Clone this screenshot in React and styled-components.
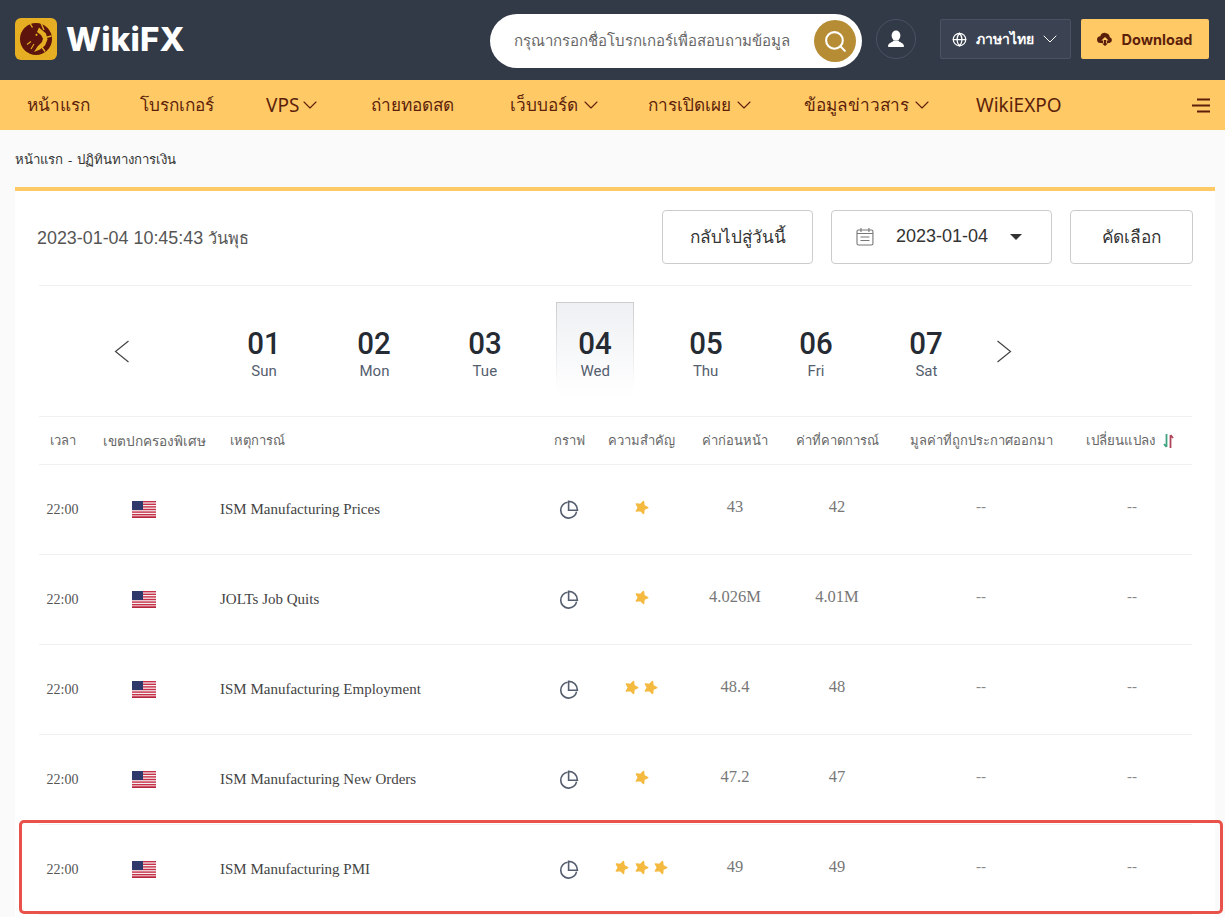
import React from "react";
import styled, { createGlobalStyle } from "styled-components";
import { ChevronDown, Search, Globe } from "lucide-react";

const Global = createGlobalStyle`
  html, body { margin: 0; padding: 0; background: #fafafa; overflow: hidden; height: 917px; }
  * { box-sizing: border-box; }
  body { font-family: "Noto Sans", "Liberation Sans", sans-serif; }
`;

const Page = styled.div`position: relative; width: 1225px; height: 917px; overflow: hidden;`;

const Header = styled.header`
  height: 80px; background: #323a48; display: flex; align-items: center; padding: 0 16px 0 15px;
`;
const LogoWrap = styled.div`display: flex; align-items: center; gap: 9px; margin-top: -2px;`;
const LogoText = styled.span`
  font-family: "Inter", "Liberation Sans", sans-serif; font-weight: 800; font-size: 33px; color: #fff; letter-spacing: .2px;
`;
const SearchBox = styled.div`
  margin-left: auto; width: 372px; height: 54px; background: #fff; border-radius: 27px;
  display: flex; align-items: center; justify-content: space-between; padding: 0 6px 0 24px;
  font-size: 15px; color: #666; margin-top: 2px; white-space: nowrap;
`;
const SearchBtn = styled.div`
  width: 42px; height: 42px; border-radius: 50%; background: #b68d35; color: #fff;
  display: flex; align-items: center; justify-content: center;
`;
const UserBtn = styled.div`
  width: 40px; height: 40px; border-radius: 50%; border: 1px solid #4a5264; margin-left: 14px;
  display: flex; align-items: center; justify-content: center; margin-top: -2px;
`;
const LangBtn = styled.div`
  width: 131px; height: 40px; margin-left: 24px; margin-top: -2px; background: #3b4352; border: 1px solid #4a5264; border-radius: 2px;
  display: flex; align-items: center; padding: 0 0 0 11px; color: #fff; font-size: 14px; font-weight: 700; white-space: nowrap;
  span { margin: 0 4px 0 9px; }
`;
const DownloadBtn = styled.div`
  width: 128px; height: 40px; margin-left: 10px; margin-top: -2px; background: #ffc966; border-radius: 2px;
  display: flex; align-items: center; justify-content: center; gap: 8px; color: #5c1f0a;
  font-size: 14.5px; font-weight: 700; font-family: "Inter", "Noto Sans", sans-serif;
`;

const Nav = styled.nav`
  height: 50px; background: #ffc966; display: flex; align-items: center; padding: 0 15px 0 27px;
  color: #5c1f0a; position: relative;
`;
const NavItem = styled.div`
  display: flex; align-items: center; margin-right: -2px; width: ${p => p.$w}px; white-space: nowrap; flex: none;
  font-size: ${p => (p.$latin ? 19 : 17.2)}px;
  svg { margin-left: ${p => (p.$latin ? -1 : 1)}px; }
`;
const MenuIcon = styled.svg`margin-left: auto;`;

const Crumb = styled.div`
  height: 57px; display: flex; align-items: center; padding: 2px 15px 0; font-size: 13.2px; color: #333; gap: 5px;
`;
const Card = styled.main`
  margin: 0 10px 0 15px; background: #fff; border-top: 4px solid #ffc966; height: 730px; padding: 0 23px 0 24px;
`;
const Toolbar = styled.div`
  height: 95px; display: flex; align-items: center; border-bottom: 1px solid #f0f0f0; padding-bottom: 1px;
`;
const Clock = styled.div`
  font-size: 17.9px; color: #555; margin-left: -2px; margin-right: auto; font-family: "Liberation Sans", "Noto Sans", sans-serif;
  span { font-size: 16.3px; }
`;
const Btn = styled.div`
  height: 54px; width: ${p => p.$w}px; margin-left: ${p => p.$ml}px; border: 1px solid #ccc; border-radius: 4px;
  display: flex; align-items: center; justify-content: center; color: #333; font-size: 17.2px; background: #fff;
  font-family: "Liberation Sans", "Noto Sans", sans-serif; margin-top: -2px; position: relative; left: 1px; white-space: nowrap;
`;
const DateBtn = styled(Btn)`
  justify-content: flex-start; padding: 0 29px 0 24px; gap: 22px; font-size: 18px;
  i { margin-left: auto; width: 0; height: 0; border-left: 6px solid transparent; border-right: 6px solid transparent; border-top: 6px solid #333; }
`;
const Strip = styled.div`
  height: 131px; border-bottom: 1px solid #f0f0f0; position: relative; display: flex; align-items: center; padding-left: 169.9px;
`;
const Arrow = styled.svg`
  position: absolute; top: 54px; left: ${p => p.$l}px;
`;
const Day = styled.div`
  width: 110.4px; flex: none; height: 131px; display: flex; justify-content: center;
`;
const DayBox = styled.div`
  width: 78px; height: 95px; margin-top: 16px; padding-top: 23px; text-align: center; font-family: "Roboto", sans-serif;
  ${p => p.$active ? `
    background: linear-gradient(180deg, #eef0f3 0%, #ffffff 100%);
    border: 1px solid; border-image: linear-gradient(180deg, #ccc 0%, #fff 90%) 1; border-bottom: none;
  ` : `border: 1px solid transparent;`}
  b { display: block; font-weight: 500; font-size: 32px; line-height: 35px; color: #262b33; transform: scaleX(.92); }
  small { display: block; font-size: 15px; line-height: 20px; color: #555e6e; }
`;
const COLS = "47px 116px 340px 54px 90px 98px 106px 182px 120px";
const HeadRow = styled.div`
  height: 48px; display: grid; grid-template-columns: ${COLS}; align-items: center; border-bottom: 1px solid #f0f0f0;
  font-size: 13px; color: #666; text-align: center;
`;
const AreaHead = styled.div`white-space: nowrap; padding-left: 17px; font-size: 13.6px;`;
const EventHead = styled.div`text-align: left; padding-left: 28px;`;
const ChangeHead = styled.div`display: flex; align-items: center; justify-content: center; gap: 8px; padding-right: 5px; font-size: 13.3px;`;
const Row = styled.div`
  height: 90px; display: grid; grid-template-columns: ${COLS}; align-items: center; border-bottom: 1px solid #f0f0f0;
  font-family: "Liberation Serif", serif; text-align: center; color: #555; font-size: 14px;
`;
const Cell = styled.div`display: flex; justify-content: center; align-items: center;`;
const StarCell = styled(Cell)`gap: 4.5px; margin-top: -4px;`;
const EventName = styled.div`text-align: left; padding-left: 18px; color: #444; font-size: 15px;`;
const Num = styled.div`font-size: 16.5px; color: #777; margin-top: -6px;`;
const Dash = styled.div`font-size: 15px; color: #888; margin-top: -6px;`;
const Highlight = styled.div`
  position: absolute; left: 19px; top: 820px; width: 1204px; height: 94px; border: 3px solid #e8524a; border-radius: 5px; pointer-events: none;
`;

const Logo = () => (
  <svg width="42" height="42" viewBox="0 0 42 42">
    <rect width="42" height="42" rx="6" fill="#e6ae22" />
    <circle cx="21" cy="21" r="16" fill="#5c140c" />
    <path d="M24 9.5L31 15.5 32.5 21.5 30 27.5 25 31.5 19 34 22.5 28.5 27 24 28 20.5 26 17 22 14z" fill="#e6ae22" />
    <path d="M26 5l3 7M36.5 18l-6 1.5M30 33.5l-3.5-5M15 5.5l2.5 4" stroke="#e6ae22" strokeWidth="1.4" />
    <path d="M12 26.5l4-3M16 31l3-5" stroke="#e6ae22" strokeWidth="1.1" />
    <circle cx="21.5" cy="16.8" r="1.1" fill="#e6ae22" />
  </svg>
);
const Flag = () => (
  <svg width="24" height="17" viewBox="0 0 24 17">
    <rect width="24" height="17" fill="#f4f0f0" />
    {[0, 2.6, 5.2, 7.8, 10.4, 13, 15.2].map(y => <rect key={y} y={y} width="24" height="1.4" fill="#c8314a" />)}
    <rect width="11" height="9" fill="#2f3a6b" />
    <rect y="16" width="24" height="1" fill="#b3283f" />
  </svg>
);
const Star = () => (
  <svg width="15" height="15" viewBox="0 0 24 24">
    <path
      transform="rotate(18 12 12)"
      d="M12 2L14.9 8 21.5 9 16.7 13.6 18 20 12 17 6 20 7.3 13.6 2.5 9 9.1 8z"
      fill="#f4b93f" stroke="#f4b93f" strokeWidth="2.4" strokeLinejoin="round"
    />
  </svg>
);
const Pie = () => (
  <svg width="20" height="20" viewBox="0 0 20 20" fill="none" stroke="#555e6e" strokeWidth="1.6">
    <path d="M8.6 2.2a8 8 0 1 0 9 9.4" />
    <path d="M9.6 1.4a8.6 8.6 0 0 1 8.8 8.8H9.6z" />
  </svg>
);
const CalIcon = () => (
  <svg width="18" height="19" viewBox="0 0 18 19" fill="none" stroke="#777" strokeWidth="1.1">
    <rect x="1" y="3" width="16" height="15" rx="1.5" />
    <path d="M5 1v4M13 1v4M1 6.5h16M4.5 10h9M4.5 13.5h9" />
  </svg>
);
const DIcon = () => (
  <svg width="16" height="14" viewBox="0 0 16 14" fill="#5c1f0a">
    <path d="M12.8 5.2A4.9 4.9 0 0 0 3.3 4.2 3.4 3.4 0 0 0 3.6 11H6V8.5H4.4L8 5l3.6 3.5H10V11h2.5a3 3 0 0 0 .3-5.8z" />
    <path d="M6.8 8h2.4v3.4H11L8 14l-3-2.6h1.8z" />
  </svg>
);
const UserIcon = () => (
  <svg width="18" height="18" viewBox="0 0 18 18" fill="#fff">
    <ellipse cx="9" cy="5.6" rx="4.4" ry="5" />
    <path d="M6.6 10.4c-.4 1.8-5.4 2-5.6 5.6 0 .8.4 1 1 1h14c.6 0 1-.2 1-1-.2-3.6-5.2-3.8-5.6-5.6z" />
  </svg>
);
const Sort = () => (
  <svg width="11" height="16" viewBox="0 0 11 16">
    <path d="M3.5 1v13M3.5 14L1 11" stroke="#3fa383" strokeWidth="1.8" fill="none" />
    <path d="M7.5 15V2M7.5 2L10 5" stroke="#b0455a" strokeWidth="1.8" fill="none" />
  </svg>
);

const navItems = [
  ["หน้าแรก", 115], ["โบรกเกอร์", 128], ["VPS", 107, true, true], ["ถ่ายทอดสด", 141], ["เว็บบอร์ด", 140, true],
  ["การเปิดเผย", 158, true], ["ข้อมูลข่าวสาร", 174, true], ["WikiEXPO", 100, false, true],
];
const days = [["01", "Sun"], ["02", "Mon"], ["03", "Tue"], ["04", "Wed", true], ["05", "Thu"], ["06", "Fri"], ["07", "Sat"]];
const rows = [
  ["ISM Manufacturing Prices", 1, "43", "42"],
  ["JOLTs Job Quits", 1, "4.026M", "4.01M"],
  ["ISM Manufacturing Employment", 2, "48.4", "48"],
  ["ISM Manufacturing New Orders", 1, "47.2", "47"],
  ["ISM Manufacturing PMI", 3, "49", "49"],
];

export default function App() {
  return (
    <Page>
      <Global />
      <Header>
        <LogoWrap><Logo /><LogoText>WikiFX</LogoText></LogoWrap>
        <SearchBox>
          กรุณากรอกชื่อโบรกเกอร์เพื่อสอบถามข้อมูล
          <SearchBtn><Search size={25} strokeWidth={2} /></SearchBtn>
        </SearchBox>
        <UserBtn><UserIcon /></UserBtn>
        <LangBtn><Globe size={15} /><span>ภาษาไทย</span><ChevronDown size={24} strokeWidth={1} /></LangBtn>
        <DownloadBtn><DIcon />Download</DownloadBtn>
      </Header>
      <Nav>
        {navItems.map(([t, w, c, l]) => (
          <NavItem key={t} $w={w} $latin={l}>{t}{c && <ChevronDown size={24} strokeWidth={1.1} />}</NavItem>
        ))}
        <MenuIcon width="18" height="15" viewBox="0 0 18 15" stroke="#5c1f0a" strokeWidth="2">
          <path d="M5 1.5h13M0 7.5h18M5 13.5h13" />
        </MenuIcon>
      </Nav>
      <Crumb><span>หน้าแรก</span><span>-</span><span>ปฏิทินทางการเงิน</span></Crumb>
      <Card>
        <Toolbar>
          <Clock>2023-01-04 10:45:43 <span>วันพุธ</span></Clock>
          <Btn $w={151} $ml={0}>กลับไปสู่วันนี้</Btn>
          <DateBtn $w={221} $ml={18}><CalIcon />2023-01-04<i /></DateBtn>
          <Btn $w={123} $ml={18}>คัดเลือก</Btn>
        </Toolbar>
        <Strip>
          <Arrow $l={74.5} width="16" height="23" viewBox="0 0 16 23" fill="none" stroke="#444" strokeWidth="1.2">
            <path d="M14.5 1L1.5 11.5 14.5 22" />
          </Arrow>
          {days.map(([n, d, a]) => (
            <Day key={n}><DayBox $active={a}><b>{n}</b><small>{d}</small></DayBox></Day>
          ))}
          <Arrow $l={956.5} width="16" height="23" viewBox="0 0 16 23" fill="none" stroke="#444" strokeWidth="1.2">
            <path d="M1.5 1L14.5 11.5 1.5 22" />
          </Arrow>
        </Strip>
        <HeadRow>
          <div>เวลา</div><AreaHead>เขตปกครองพิเศษ</AreaHead><EventHead>เหตุการณ์</EventHead><div>กราฟ</div><div>ความสำคัญ</div>
          <div>ค่าก่อนหน้า</div><div>ค่าที่คาดการณ์</div><div>มูลค่าที่ถูกประกาศออกมา</div>
          <ChangeHead>เปลี่ยนแปลง <Sort /></ChangeHead>
        </HeadRow>
        {rows.map(([name, stars, prev, fc]) => (
          <Row key={name}>
            <Cell>22:00</Cell>
            <Cell><Flag /></Cell>
            <EventName>{name}</EventName>
            <Cell><Pie /></Cell>
            <StarCell>{Array.from({ length: stars }, (_, i) => <Star key={i} />)}</StarCell>
            <Num>{prev}</Num>
            <Num>{fc}</Num>
            <Dash>--</Dash>
            <Dash>--</Dash>
          </Row>
        ))}
      </Card>
      <Highlight />
    </Page>
  );
}
